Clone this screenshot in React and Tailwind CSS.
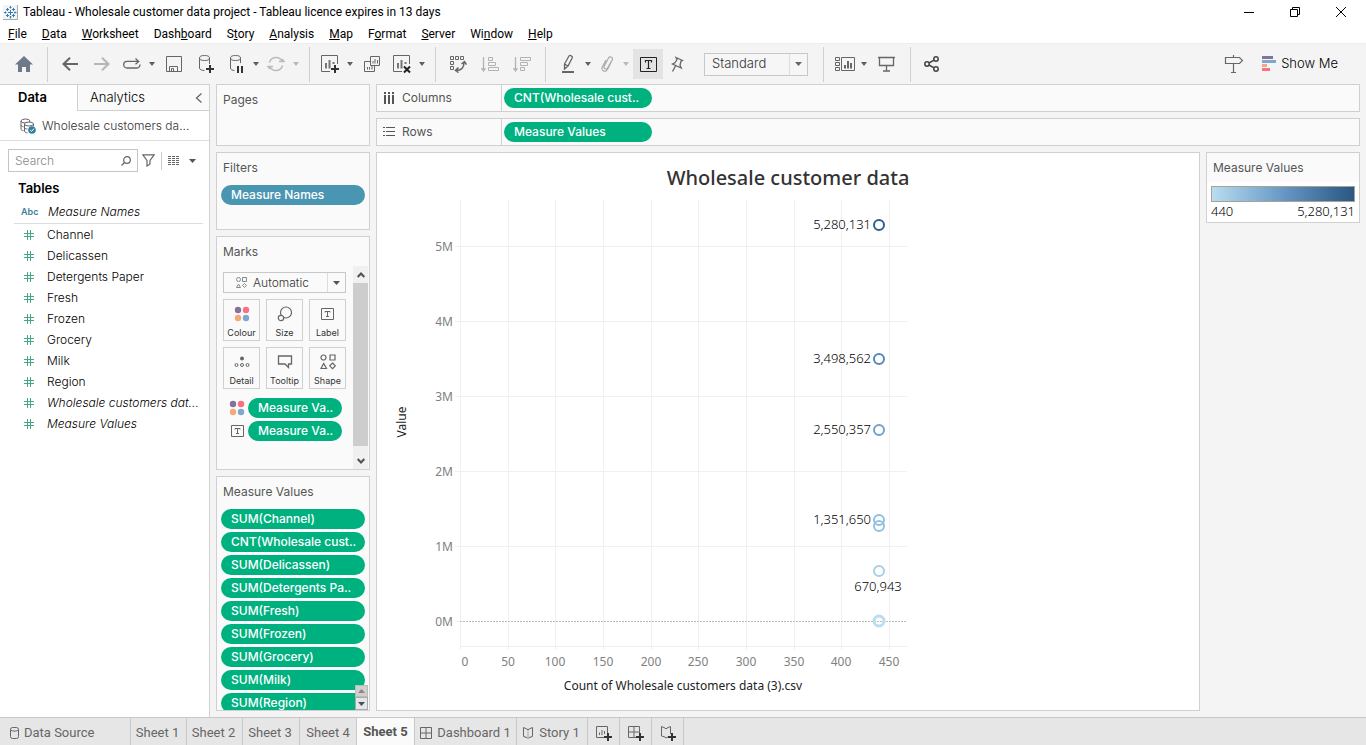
import React from "react";

const SANS = "font-['Inter','Liberation_Sans',sans-serif]";
const PLOT = "'Noto Sans', 'Open Sans', sans-serif";

function Svg({ w = 20, h = 20, children, className = "", color = "#666", sw = 1 }) {
  return (
    <svg width={w} height={h} viewBox={`0 0 ${w} ${h}`} fill="none" stroke={color} strokeWidth={sw} className={`shrink-0 ${className}`} aria-hidden="true">
      {children}
    </svg>
  );
}

function Caret({ dim }) {
  return (
    <button type="button" aria-label="More options" className="flex h-8 w-3 items-center justify-center">
      <Svg w={6} h={4}><path d="M0 0h6L3 4z" fill={dim ? "#b8b8b8" : "#5f5f5f"} stroke="none" /></Svg>
    </button>
  );
}

function Tool({ label, className = "w-8", children }) {
  return (
    <button type="button" aria-label={label} className={`flex h-[30px] items-center justify-center ${className}`}>
      {children}
    </button>
  );
}

function Group({ className = "pl-1.5 pr-[7px]", children }) {
  return <div className={`flex h-[35px] items-center border-r border-[#d0d0d0] ${className}`}>{children}</div>;
}

function Plus({ x, y, s = 4 }) {
  return <path d={`M${x - s} ${y}h${2 * s}M${x} ${y - s}v${2 * s}`} stroke="#333" strokeWidth="2" />;
}

function TitleBar() {
  return (
    <header className="flex h-6 items-center justify-between bg-white pl-[3px] pr-0.5 font-['Roboto','Open_Sans',sans-serif] text-xs text-black">
      <div className="flex items-center gap-[5px]">
        <Svg w={15} h={15} color="#2f7fb0">
          <rect x="0" y="0" width="15" height="15" fill="#f3f3f3" stroke="none" />
          <path d="M14.5 0v14.5H0" stroke="#aaa" />
          <path d="M7.500 5v5M5 7.500h5M7.500 1v2.500M6.500 2.500h2M7.500 11v2.500M6.500 12h2M2.500 6.500v2M1 7.500h2.500M12 6.500v2M11 7.500h2.500M4.500 3v3M3 4.500h3M10.500 3v3M9 4.500h3M4.500 9v3M3 10.500h3M10.500 9v3M9 10.500h3" />
        </Svg>
        <h1>Tableau - Wholesale customer data project - Tableau licence expires in 13 days</h1>
      </div>
      <div className="flex">
        <button type="button" aria-label="Minimise" className="flex h-6 w-[46px] items-center justify-center"><Svg w={10} h={10} color="#000"><path d="M0 5.500h10" /></Svg></button>
        <button type="button" aria-label="Restore" className="flex h-6 w-[46px] items-center justify-center"><Svg w={10} h={10} color="#000"><path d="M.5 2.500h7v7h-7zM2.500 2.500v-2h7v7h-2" /></Svg></button>
        <button type="button" aria-label="Close" className="flex h-6 w-[46px] items-center justify-center"><Svg w={10} h={10} color="#000"><path d="M0 0l10 10M10 0L0 10" /></Svg></button>
      </div>
    </header>
  );
}

const menus = [["", "F", "ile"], ["", "D", "ata"], ["", "W", "orksheet"], ["Dash", "b", "oard"], ["S", "t", "ory"], ["", "A", "nalysis"], ["", "M", "ap"], ["F", "o", "rmat"], ["", "S", "erver"], ["Wi", "n", "dow"], ["", "H", "elp"]];

function MenuBar() {
  return (
    <nav className="flex h-[19px] items-center gap-[15px] bg-white pl-2 font-['Roboto','Open_Sans',sans-serif] text-xs text-black">
      {menus.map(([a, b, c]) => (
        <button type="button" key={a + b + c}>{a}<u>{b}</u>{c}</button>
      ))}
    </nav>
  );
}

function BarsIcon({ children }) {
  return (
    <Svg w={20} h={20}>
      <path d="M10 17.500H1.500v-16h16V10" />
      <path d="M6 14.500V9M9.500 14.500V6M13.500 10V8" strokeWidth="2" stroke="#777" />
      {children}
    </Svg>
  );
}

function Toolbar() {
  return (
    <div className="flex h-[41px] items-center justify-between border-t border-[#eee] bg-[#f4f4f4]">
      <div className="flex items-center">
        <Group className="w-12 justify-center">
          <Tool label="Home">
            <Svg w={18} h={16}><path d="M9 0l9 8.500h-3V16h-4v-5H7v5H3V8.500H0z" fill="#6e7a8a" stroke="none" /></Svg>
          </Tool>
        </Group>
        <Group>
          <Tool label="Back"><Svg w={16} h={14} sw={2}><path d="M16 7H1.500M8 .8L1.500 7 8 13.200" /></Svg></Tool>
          <Tool label="Forward"><Svg w={16} h={14} sw={2} color="#b5b5b5"><path d="M0 7h14.500M8 .8L14.500 7 8 13.200" /></Svg></Tool>
          <Tool label="Replay" className="w-7"><Svg w={20} h={14} sw={1.300}><path d="M9.500 11H5a3.300 3.300 0 0 1 0-6.600H16M13.500 1.500l3.200 2.900-3.200 2.900M9.500 11H15a3.200 3.200 0 0 0 3-3.500" /></Svg></Tool>
          <Caret />
          <Tool label="Save"><Svg w={18} h={18}><path d="M1.500 1.500h15v15h-15zM4.500 16.500v-5h8v5M6.500 16v-2.500h2V16" /></Svg></Tool>
          <Tool label="New data source"><Svg w={18} h={20}><ellipse cx="7.500" cy="4" rx="5" ry="2.500" /><path d="M2.500 4v10c0 1.500 2 2.500 5 2.500M12.500 4v6" /><Plus x={13} y={15} /></Svg></Tool>
          <Tool label="Pause updates" className="w-7"><Svg w={18} h={20}><ellipse cx="8.500" cy="4" rx="5" ry="2.500" /><path d="M3.500 4v10c0 1.500 2 2.500 4 2.500M13.500 4v5" /><path d="M11 12v7M15 12v7" stroke="#333" strokeWidth="2" /></Svg></Tool>
          <Caret />
          <Tool label="Refresh" className="w-7"><Svg w={18} h={16} color="#bbb" sw={1.5}><path d="M2.500 6.500A6.800 6.800 0 0 1 15 5M15.500 9.500A6.800 6.800 0 0 1 3 11M12 5.500h5l-2-2.500M6 10.500H1l2 2.500" /></Svg></Tool>
          <Caret dim />
        </Group>
        <Group>
          <Tool label="New worksheet" className="w-7"><BarsIcon><Plus x={15} y={15} /></BarsIcon></Tool>
          <Caret />
          <Tool label="Duplicate"><Svg w={18} h={18}><path d="M7.500 1.500h9v9h-9zM7 6.500H1.500v10h10V11" /><path d="M10 8.500V6M12 8.500V4M14.500 8.500V5M4.500 14.500V12M6.500 14.500V12M9 14.500V11" /></Svg></Tool>
          <Tool label="Clear sheet" className="w-7"><BarsIcon><path d="M12 12.500l6 6M18 12.500l-6 6" stroke="#222" strokeWidth="2" /></BarsIcon></Tool>
          <Caret />
        </Group>
        <Group>
          <Tool label="Swap rows and columns"><Svg w={18} h={18}><path d="M1.500 1.500h3v3h-3zM6.500 1.500h3v3h-3zM11.500 1.500h3v3h-3zM1.500 6.500h3v3h-3zM1.500 11.500h3v3h-3z" /><path d="M7 15.500c5 0 8-3 8-8M12.500 9l3-2.500 2 3M9.500 12.500l-3 3 3 2" strokeWidth="1.500" /></Svg></Tool>
          <Tool label="Sort ascending"><Svg w={18} h={16} color="#b2b2b2"><path d="M2.500 1v14M.5 12l2 3 2-3" strokeWidth="1.300" /><path d="M7.500 1.500h4v3h-4zM7.500 6.500h7v3h-7zM7.500 11.500h10v3h-10z" /></Svg></Tool>
          <Tool label="Sort descending"><Svg w={18} h={16} color="#b2b2b2"><path d="M2.500 1v14M.5 12l2 3 2-3" strokeWidth="1.300" /><path d="M7.500 1.500h10v3h-10zM7.500 6.500h7v3h-7zM7.500 11.500h4v3h-4z" /></Svg></Tool>
        </Group>
        <Group className="pl-2 pr-[15px]">
          <Tool label="Highlight" className="w-7"><Svg w={14} h={20} sw={1.300}><path d="M3.500 10L8 2c.8-1.300 4 .2 3.300 1.800L7 12l-3.500 3zM3.500 10L7 12" /><path d="M1 18h12" strokeWidth="2" /></Svg></Tool>
          <Caret />
          <Tool label="Group members" className="w-[26px]"><Svg w={14} h={18} color="#aaa" sw={1.200}><path d="M11.500 6L7.500 13c-1.200 2-4.500.5-3.300-1.800L8.500 3c1.400-2.300 5-.5 3.700 2L7.500 14.500c-2 3.500-7 1-5.200-2.500L6 5" /></Svg></Tool>
          <Caret dim />
          <Tool label="Show mark labels" className="ml-px w-[30px] bg-[#e3e3e3]"><Svg w={17} h={15} color="#222"><path d="M.5.5h16v14H.5z" /><path d="M5.500 5.500v-2h6v2M8.500 3.500v8M6.500 11.500h4" strokeWidth="1.200" /></Svg></Tool>
          <Tool label="Fix axes" className="w-7"><Svg w={14} h={16} sw={1.300}><path d="M6 1.500l6.500 3-1.500.8-1 4 1.200 2.700-8.700-4 2.500-1.200L7 3.500zM5.500 10L2.500 15.500" /></Svg></Tool>
          <div className="ml-[13px] flex h-[23px] w-[104px] items-center border border-[#c8c8c8] bg-[#f6f6f6]">
            <select aria-label="Fit" className="h-full w-20 flex-1 appearance-none bg-transparent pl-[7px] font-['Inter','Liberation_Sans',sans-serif] text-[13px] font-light text-[#333] outline-none"><option>Standard</option></select>
            <span className="flex h-full w-[18px] items-center justify-center border-l border-[#ddd]"><Svg w={7} h={4}><path d="M0 0h7L3.500 4z" fill="#666" stroke="none" /></Svg></span>
          </div>
        </Group>
        <Group className="pl-2 pr-2">
          <Tool label="Show cards" className="w-[26px]"><Svg w={20} h={15}><path d="M.5.5h4v3h-4zM.5 5.500h4v3h-4zM.5 10.500h4v3h-4zM6.500.5h13v13h-13z" /><path d="M10 11.500V8M13 11.500V4M16 11.500V6" strokeWidth="2" /></Svg></Tool>
          <Caret />
          <Tool label="Presentation mode"><Svg w={17} h={16} sw={1.300}><path d="M0 1.500h17M1.500 1.500v8h14v-8M8.500 9.500v6M5 15h7" /></Svg></Tool>
        </Group>
        <Tool label="Share" className="w-[42px]"><Svg w={16} h={16} color="#444" sw={1.500}><circle cx="3" cy="8" r="2.200" /><circle cx="12" cy="3" r="2.200" /><circle cx="12" cy="13" r="2.200" /><path d="M5 7l5-2.800M5 9l5 2.800" /></Svg></Tool>
      </div>
      <div className="flex items-center gap-2 pr-7">
        <Tool label="Guide" className="w-10"><Svg w={20} h={20} sw={1.200}><path d="M1.500 3.500h14l3 3-3 3h-14zM9.500 1v2.500M9.500 9.500v9M7 18.500h5" /></Svg></Tool>
        <button type="button" className="flex items-center gap-[5px] text-[13px] font-light text-black">
          <svg width="14" height="16" viewBox="0 0 14 16" aria-hidden="true"><path d="M0 0h11v3H0z" fill="#85719b" /><path d="M0 4h14v3H0z" fill="#7fa6cc" /><path d="M0 8h5v3H0z" fill="#f3a978" /><path d="M0 12h8v3H0z" fill="#fb6f80" /></svg>
          Show Me
        </button>
      </div>
    </div>
  );
}

const fields = [["Channel"], ["Delicassen"], ["Detergents Paper"], ["Fresh"], ["Frozen"], ["Grocery"], ["Milk"], ["Region"], ["Wholesale customers dat...", true], ["Measure Values", true]];

function DataPane() {
  return (
    <aside className="flex w-[210px] shrink-0 flex-col border-r border-[#d0d0d0] bg-white">
      <div className="flex h-[27px] shrink-0 text-[13px]">
        <button type="button" className="w-[77px] border-t border-[#d0d0d0] pr-3 font-semibold text-black">Data</button>
        <div className="flex flex-1 items-center justify-between border border-r-0 border-[#d0d0d0] bg-[#fafafa] pl-3 pr-1.5 font-light text-black">
          <button type="button">Analytics</button>
          <button type="button" aria-label="Collapse pane"><Svg w={8} h={10} sw={1.300}><path d="M6.500.5L1.500 5l5 4.500" /></Svg></button>
        </div>
      </div>
      <div className="flex h-[30px] shrink-0 items-center gap-1.5 border-b border-[#ddd] pl-5 text-xs font-light text-[#333]">
        <Svg w={16} h={16}>
          <ellipse cx="5.500" cy="3" rx="4.500" ry="2" /><path d="M1 3v8c0 1 1 1.500 2.500 1.800M1 7c0 1 1 1.500 2.500 1.800" />
          <ellipse cx="9" cy="6" rx="4.500" ry="2" fill="#fff" /><path d="M4.500 6v7c0 1 1 1.500 3 2M13.500 6v2M4.500 9.500c.5 1 1.500 1.500 3 1.500" />
          <circle cx="12" cy="12" r="3.800" fill="#2f80a0" stroke="none" /><path d="M10.200 12l1.400 1.400 2.400-2.800" stroke="#fff" />
        </Svg>
        Wholesale customers da...
      </div>
      <div className="flex h-[39px] shrink-0 items-center pl-2">
        <div className="flex h-[23px] w-[130px] items-center border border-[#c4c4c4] pr-1.5">
          <input aria-label="Search" placeholder="Search" className="w-full min-w-0 bg-transparent pl-1.5 text-xs font-light outline-none placeholder:text-[#888]" />
          <Svg w={10} h={10} sw={1.200}><circle cx="6" cy="4" r="3.300" /><path d="M3.500 6.500L.5 9.500" /></Svg>
        </div>
        <button type="button" aria-label="Filter fields" className="ml-1 mr-1.5"><Svg w={13} h={13} sw={1.200}><path d="M.8.800h11.400L8 6.500V10l-3 2V6.500z" /></Svg></button>
        <div className="h-[18px] border-l border-[#ccc]" />
        <button type="button" aria-label="View options" className="ml-1.5 flex items-center gap-2">
          <Svg w={13} h={10}><path d="M0 .5h12M0 2.500h12M0 4.500h12M0 6.500h12M0 8.500h12" strokeDasharray="3 1" /></Svg>
          <Svg w={7} h={4}><path d="M0 0h7L3.500 4z" fill="#555" stroke="none" /></Svg>
        </button>
      </div>
      <h2 className="h-[21px] shrink-0 pl-[18px] text-[13px] font-semibold leading-4 text-black">Tables</h2>
      <div className="ml-3.5 mr-1.5 flex h-[23px] shrink-0 items-center border-b border-[#ddd] text-xs font-light italic text-black">
        <span className="w-[34px] pl-[7px] text-[9px] font-semibold not-italic text-[#3d7f9b]">Abc</span>
        Measure Names
      </div>
      <ul className="pl-6 text-xs font-light leading-[21px] text-black">
        {fields.map(([name, it]) => (
          <li key={name} className={`flex items-center gap-[13px] whitespace-nowrap ${it ? "italic" : ""}`}>
            <Svg w={10} h={10} color="#43a885"><path d="M3.500 0v10M6.500 0v10M0 3.500h10M0 6.500h10" /></Svg>
            {name}
          </li>
        ))}
      </ul>
    </aside>
  );
}

function Pill({ children, className = "bg-[#00b180]" }) {
  return <button type="button" className={`h-5 shrink-0 overflow-hidden whitespace-nowrap rounded-full pl-2.5 pr-1.5 text-left text-xs font-medium text-white ${className}`}>{children}</button>;
}

function Card({ title, className = "", children }) {
  return (
    <section className={`flex flex-col border border-[#d0d0d0] bg-[#fafafa] ${className}`}>
      <h3 className="h-[31px] shrink-0 pl-1.5 text-xs leading-[29px] text-[#555]">{title}</h3>
      {children}
    </section>
  );
}

function ColourDots() {
  return (
    <svg width="16" height="16" viewBox="0 0 16 16" className="shrink-0" aria-hidden="true">
      <circle cx="4" cy="4" r="3.200" fill="#85719b" /><circle cx="12" cy="4" r="3.200" fill="#fb6f80" /><circle cx="4" cy="12" r="3.200" fill="#f3a978" /><circle cx="12" cy="12" r="3.200" fill="#7fa6cc" />
    </svg>
  );
}

function LabelIcon() {
  return <Svg w={13} h={12}><path d="M.5.5h12v11H.5z" /><path d="M4 4.500v-1h5v1M6.500 3.500V9M5 8.500h3" /></Svg>;
}

const shapes = <><circle cx="3.500" cy="3.500" r="2.500" /><path d="M10 1h5v5h-5zM1 14.500h5.500L3.700 9.500zM12.500 9l2.800 2.800-2.800 2.800-2.800-2.800z" /></>;

const markCards = [
  ["Colour", <ColourDots />],
  ["Size", <Svg w={16} h={16} sw={1.200}><circle cx="9" cy="6.500" r="5.500" /><circle cx="4" cy="12" r="2.700" fill="#fafafa" /></Svg>],
  ["Label", <LabelIcon />],
  ["Detail", <Svg w={16} h={12}><circle cx="8" cy="2.500" r="2" fill="#666" stroke="none" /><circle cx="2.500" cy="9" r="1.500" /><circle cx="8" cy="9" r="1.500" /><circle cx="13.500" cy="9" r="1.500" /></Svg>],
  ["Tooltip", <Svg w={16} h={14} sw={1.300}><path d="M1.500 1h13v8h-3v3.500L8 9H1.500z" /></Svg>],
  ["Shape", <Svg w={16} h={16} sw={1.200}>{shapes}</Svg>],
];

const measures = ["SUM(Channel)", "CNT(Wholesale cust..", "SUM(Delicassen)", "SUM(Detergents Pa..", "SUM(Fresh)", "SUM(Frozen)", "SUM(Grocery)", "SUM(Milk)", "SUM(Region)"];

function Shelves() {
  return (
    <div className="flex w-[154px] shrink-0 flex-col gap-1.5">
      <Card title="Pages" className="h-[62px] shrink-0" />
      <Card title="Filters" className="h-[78px] shrink-0">
        <Pill className="mx-1 mt-px bg-[#4a96b2]">Measure Names</Pill>
      </Card>
      <Card title="Marks" className="h-[234px] shrink-0">
        <div className="-mt-1 flex min-h-0 flex-1">
          <div className="flex flex-1 flex-col pl-1.5 pr-[7px] pt-2">
            <div className="flex h-[21px] items-center border border-[#c8c8c8] bg-[#fafafa] pl-3">
              <Svg w={11} h={11} color="#888"><circle cx="2.500" cy="2.500" r="2" /><path d="M6.500.5h4v4h-4zM.5 10.500h4L2.500 7zM8.500 6.500l2 2-2 2-2-2z" /></Svg>
              <select aria-label="Mark type" className="h-full w-16 flex-1 appearance-none bg-transparent pl-1.5 text-xs font-light text-[#333] outline-none"><option>Automatic</option></select>
              <span className="flex h-full w-[18px] items-center justify-center border-l border-[#ddd]"><Svg w={7} h={4}><path d="M0 0h7L3.500 4z" fill="#555" stroke="none" /></Svg></span>
            </div>
            <div className="mt-1.5 grid grid-cols-3 gap-1.5">
              {markCards.map(([name, icon]) => (
                <button type="button" key={name} className="flex h-[42px] flex-col items-center border border-[#d0d0d0] bg-[#fafafa] text-[9px] leading-3 text-[#333]">
                  <span className="flex h-[27px] items-center">{icon}</span>
                  {name}
                </button>
              ))}
            </div>
            <div className="mt-[9px] flex items-center gap-[3px] pl-1.5"><ColourDots /><Pill className="w-[94px] bg-[#00b180]">Measure Va..</Pill></div>
            <div className="mt-[3px] flex items-center gap-[3px] pl-1.5"><span className="flex w-4 justify-center"><LabelIcon /></span><Pill className="w-[94px] bg-[#00b180]">Measure Va..</Pill></div>
          </div>
          <div className="mr-px mt-0.5 flex w-[15px] flex-col items-center bg-[#f0f0f0]">
            <span className="flex h-[17px] items-center"><Svg w={8} h={6} sw={2} color="#505050"><path d="M.7 5L4 1.500 7.300 5" /></Svg></span>
            <div className="w-full flex-1 bg-[#cdcdcd]" />
            <span className="flex h-[23px] items-end pb-[5px]"><Svg w={8} h={6} sw={2} color="#505050"><path d="M.7 1L4 4.500 7.300 1" /></Svg></span>
          </div>
        </div>
      </Card>
      <Card title="Measure Values" className="relative min-h-0 flex-1 overflow-hidden">
        <div className="mt-px flex min-h-0 flex-col gap-[3px] overflow-hidden px-1">
          {measures.map((m) => <Pill key={m}>{m}</Pill>)}
        </div>
        <div className="absolute bottom-0 right-px flex flex-col">
          <button type="button" aria-label="Scroll up" className="flex h-3 w-[13px] items-center justify-center border border-[#bbb] bg-[#d0d0d0]"><Svg w={7} h={4}><path d="M0 4h7L3.500 0z" fill="#888" stroke="none" /></Svg></button>
          <button type="button" aria-label="Scroll down" className="flex h-[13px] w-[13px] items-center justify-center border border-[#aaa] bg-[#e6e6e6]"><Svg w={7} h={4}><path d="M0 0h7L3.500 4z" fill="#445069" stroke="none" /></Svg></button>
        </div>
      </Card>
    </div>
  );
}

function Shelf({ name, icon, children }) {
  return (
    <div className="flex h-7 shrink-0 items-center border border-[#d0d0d0] bg-[#fafafa] text-xs text-[#555]">
      <div className="flex h-full w-[125px] items-center gap-[7px] border-r border-[#d0d0d0] pl-1.5">{icon}{name}</div>
      <Pill className="ml-0.5 w-[148px] bg-[#00b180]">{children}</Pill>
    </div>
  );
}

const points = [
  { y: 26, c: "#2f5d8f", label: "5,280,131" },
  { y: 160, c: "#5588bb", label: "3,498,562" },
  { y: 231, c: "#70a2cd", label: "2,550,357" },
  { y: 321, c: "#90bfe0", label: "1,351,650" },
  { y: 327, c: "#92c1e1" },
  { y: 372, c: "#a6cfe9", label: "670,943", below: true },
  { y: 422, c: "#b9ddf1", w: 3 },
];
const xTicks = [[83, 0, 88], [131, 50], [178, 100], [226, 150], [274, 200], [321, 250], [369, 300], [417, 350], [464, 400], [512, 450]];

function Plot() {
  return (
    <svg width="540" height="500" viewBox="0 0 540 500" role="img" aria-label="Value against count of customers" fontFamily={PLOT} fontSize="13">
      {xTicks.map(([x, v, tx]) => (
        <g key={v}>
          <path d={`M${x + 0.5} 1v450`} stroke="#f0f0f0" />
          <text x={tx ?? x} y="467" textAnchor="middle" fontSize="12" fill="#808080">{v}</text>
        </g>
      ))}
      {[5, 4, 3, 2, 1, 0].map((v, i) => (
        <g key={v}>
          <path d={`M78 ${47.5 + i * 75}h5`} stroke="#f0f0f0" />
          <path d={`M83 ${47.5 + i * 75}h447`} stroke={v ? "#f0f0f0" : "#bbb"} strokeDasharray={v ? undefined : "2 1"} />
          <text x="76" y={52 + i * 75} textAnchor="end" fontSize="12" fill="#808080">{v}M</text>
        </g>
      ))}
      <path d="M83 447.500h447" stroke="#f0f0f0" />
      {points.map((p) => (
        <g key={p.y}>
          <circle cx="502" cy={p.y} r="5" fill="none" stroke={p.c} strokeWidth={p.w ?? 2} />
          {p.label && <text x={p.below ? 501 : 494} y={p.below ? 392 : p.y + 4} textAnchor={p.below ? "middle" : "end"} fontWeight="300" fill="#000">{p.label}</text>}
        </g>
      ))}
      <text transform="translate(29 223) rotate(-90)" textAnchor="middle" fontSize="12" fill="#222">Value</text>
      <text x="306" y="491" textAnchor="middle" fontSize="12" fill="#222">Count of Wholesale customers data (3).csv</text>
    </svg>
  );
}

function Workspace() {
  return (
    <main className="flex min-w-0 flex-1 flex-col gap-1.5">
      <Shelf name="Columns" icon={<Svg w={12} h={12} color="#555"><path d="M2 0v2M6 0v2M10 0v2M2 3v9M6 3v9M10 3v9" strokeWidth="2" /></Svg>}>CNT(Wholesale cust..</Shelf>
      <Shelf name="Rows" icon={<Svg w={12} h={12} color="#555"><path d="M0 1.500h2M0 5.500h2M0 9.500h2M3 1.500h9M3 5.500h9M3 9.500h9" /></Svg>}>Measure Values</Shelf>
      <div className="flex min-h-0 flex-1 items-start gap-1.5">
        <section className="h-full min-w-0 flex-1 overflow-hidden border border-[#d0d0d0] bg-white">
          <h2 className="h-[46px] text-center font-['Noto_Sans','Open_Sans',sans-serif] text-xl font-medium leading-[50px] text-[#333]">Wholesale customer data</h2>
          <Plot />
        </section>
        <section className="h-[71px] w-[154px] shrink-0 border border-[#d0d0d0] bg-white text-xs text-[#333]">
          <h3 className="h-[29px] bg-[#fafafa] pl-1.5 leading-[29px] text-[#555]">Measure Values</h3>
          <div className="mx-1 mt-1 h-4 border border-[#aaa290] bg-linear-to-r from-[#b9ddf1] via-[#6798c5] to-[#2a5783]" />
          <div className="flex justify-between px-1 font-['Noto_Sans','Open_Sans',sans-serif] text-[13px] font-light leading-[18px] text-black"><span>440</span><span>5,280,131</span></div>
        </section>
      </div>
    </main>
  );
}

const book = "M1.500 1.500l3.500 1.500 1 1 1-1 3.500-1.500v9L7 11.500l-1 1-1-1-3.500-1z";

function SheetTab({ className = "", children }) {
  return <button type="button" className={`flex h-full shrink-0 items-center justify-center gap-[5px] whitespace-nowrap border-r border-[#c8c8c8] pt-0.5 ${className}`}>{children}</button>;
}

function SheetTabs() {
  return (
    <footer className="flex h-7 shrink-0 border-t border-[#c8c8c8] bg-[#e6e6e6] font-['Roboto','Inter',sans-serif] text-[13px] text-[#666]">
      <SheetTab className="w-[131px] justify-start! pl-2.5"><Svg w={9} h={12}><rect x=".5" y=".5" width="8" height="11" rx="2" /><path d="M.5 3c2 1.500 6 1.500 8 0" /></Svg>Data Source</SheetTab>
      <SheetTab className="w-14 pr-0.5">Sheet 1</SheetTab>
      <SheetTab className="w-14 pr-0.5">Sheet 2</SheetTab>
      <SheetTab className="w-[57px] pr-0.5">Sheet 3</SheetTab>
      <SheetTab className="w-[57px]">Sheet 4</SheetTab>
      <SheetTab className="w-[58px] bg-[#fafafa] pb-0.5 font-bold text-[#555]">Sheet 5</SheetTab>
      <SheetTab className="w-[102px]"><Svg w={12} h={12}><path d="M.5.5h11v11H.5zM.5 6h11M6 .5v11" /></Svg>Dashboard 1</SheetTab>
      <SheetTab className="w-[71px] pr-0.5"><Svg w={12} h={13}><path d={book} /><path d="M6 4v8" stroke="#aaa" /></Svg>Story 1</SheetTab>
      <SheetTab className="w-8"><Svg w={16} h={16}><path d="M8 12.500H.5v-11h11V9M3.500 10V7.500M6 10V5M8.500 9V6" /><Plus x={12} y={12} /></Svg></SheetTab>
      <SheetTab className="w-8"><Svg w={16} h={16}><path d="M8 12.500H.5v-11h11V9M.5 7h11M6 1.500v11" /><Plus x={12} y={12} /></Svg></SheetTab>
      <SheetTab className="w-8"><Svg w={16} h={16}><path d="M8 12l-2 1-1-1-3.500-1V1.500l3.500 1.500 1 1 1-1 3.500-1.500V9" /><Plus x={12} y={12} /></Svg></SheetTab>
    </footer>
  );
}

export default function App() {
  return (
    <div className={`flex h-screen flex-col bg-[#f4f4f4] ${SANS}`}>
      <TitleBar />
      <MenuBar />
      <Toolbar />
      <div className="flex min-h-0 flex-1 gap-1.5 pr-1.5">
        <DataPane />
        <div className="flex min-w-0 flex-1 gap-1.5 pb-1.5">
          <Shelves />
          <Workspace />
        </div>
      </div>
      <SheetTabs />
    </div>
  );
}
